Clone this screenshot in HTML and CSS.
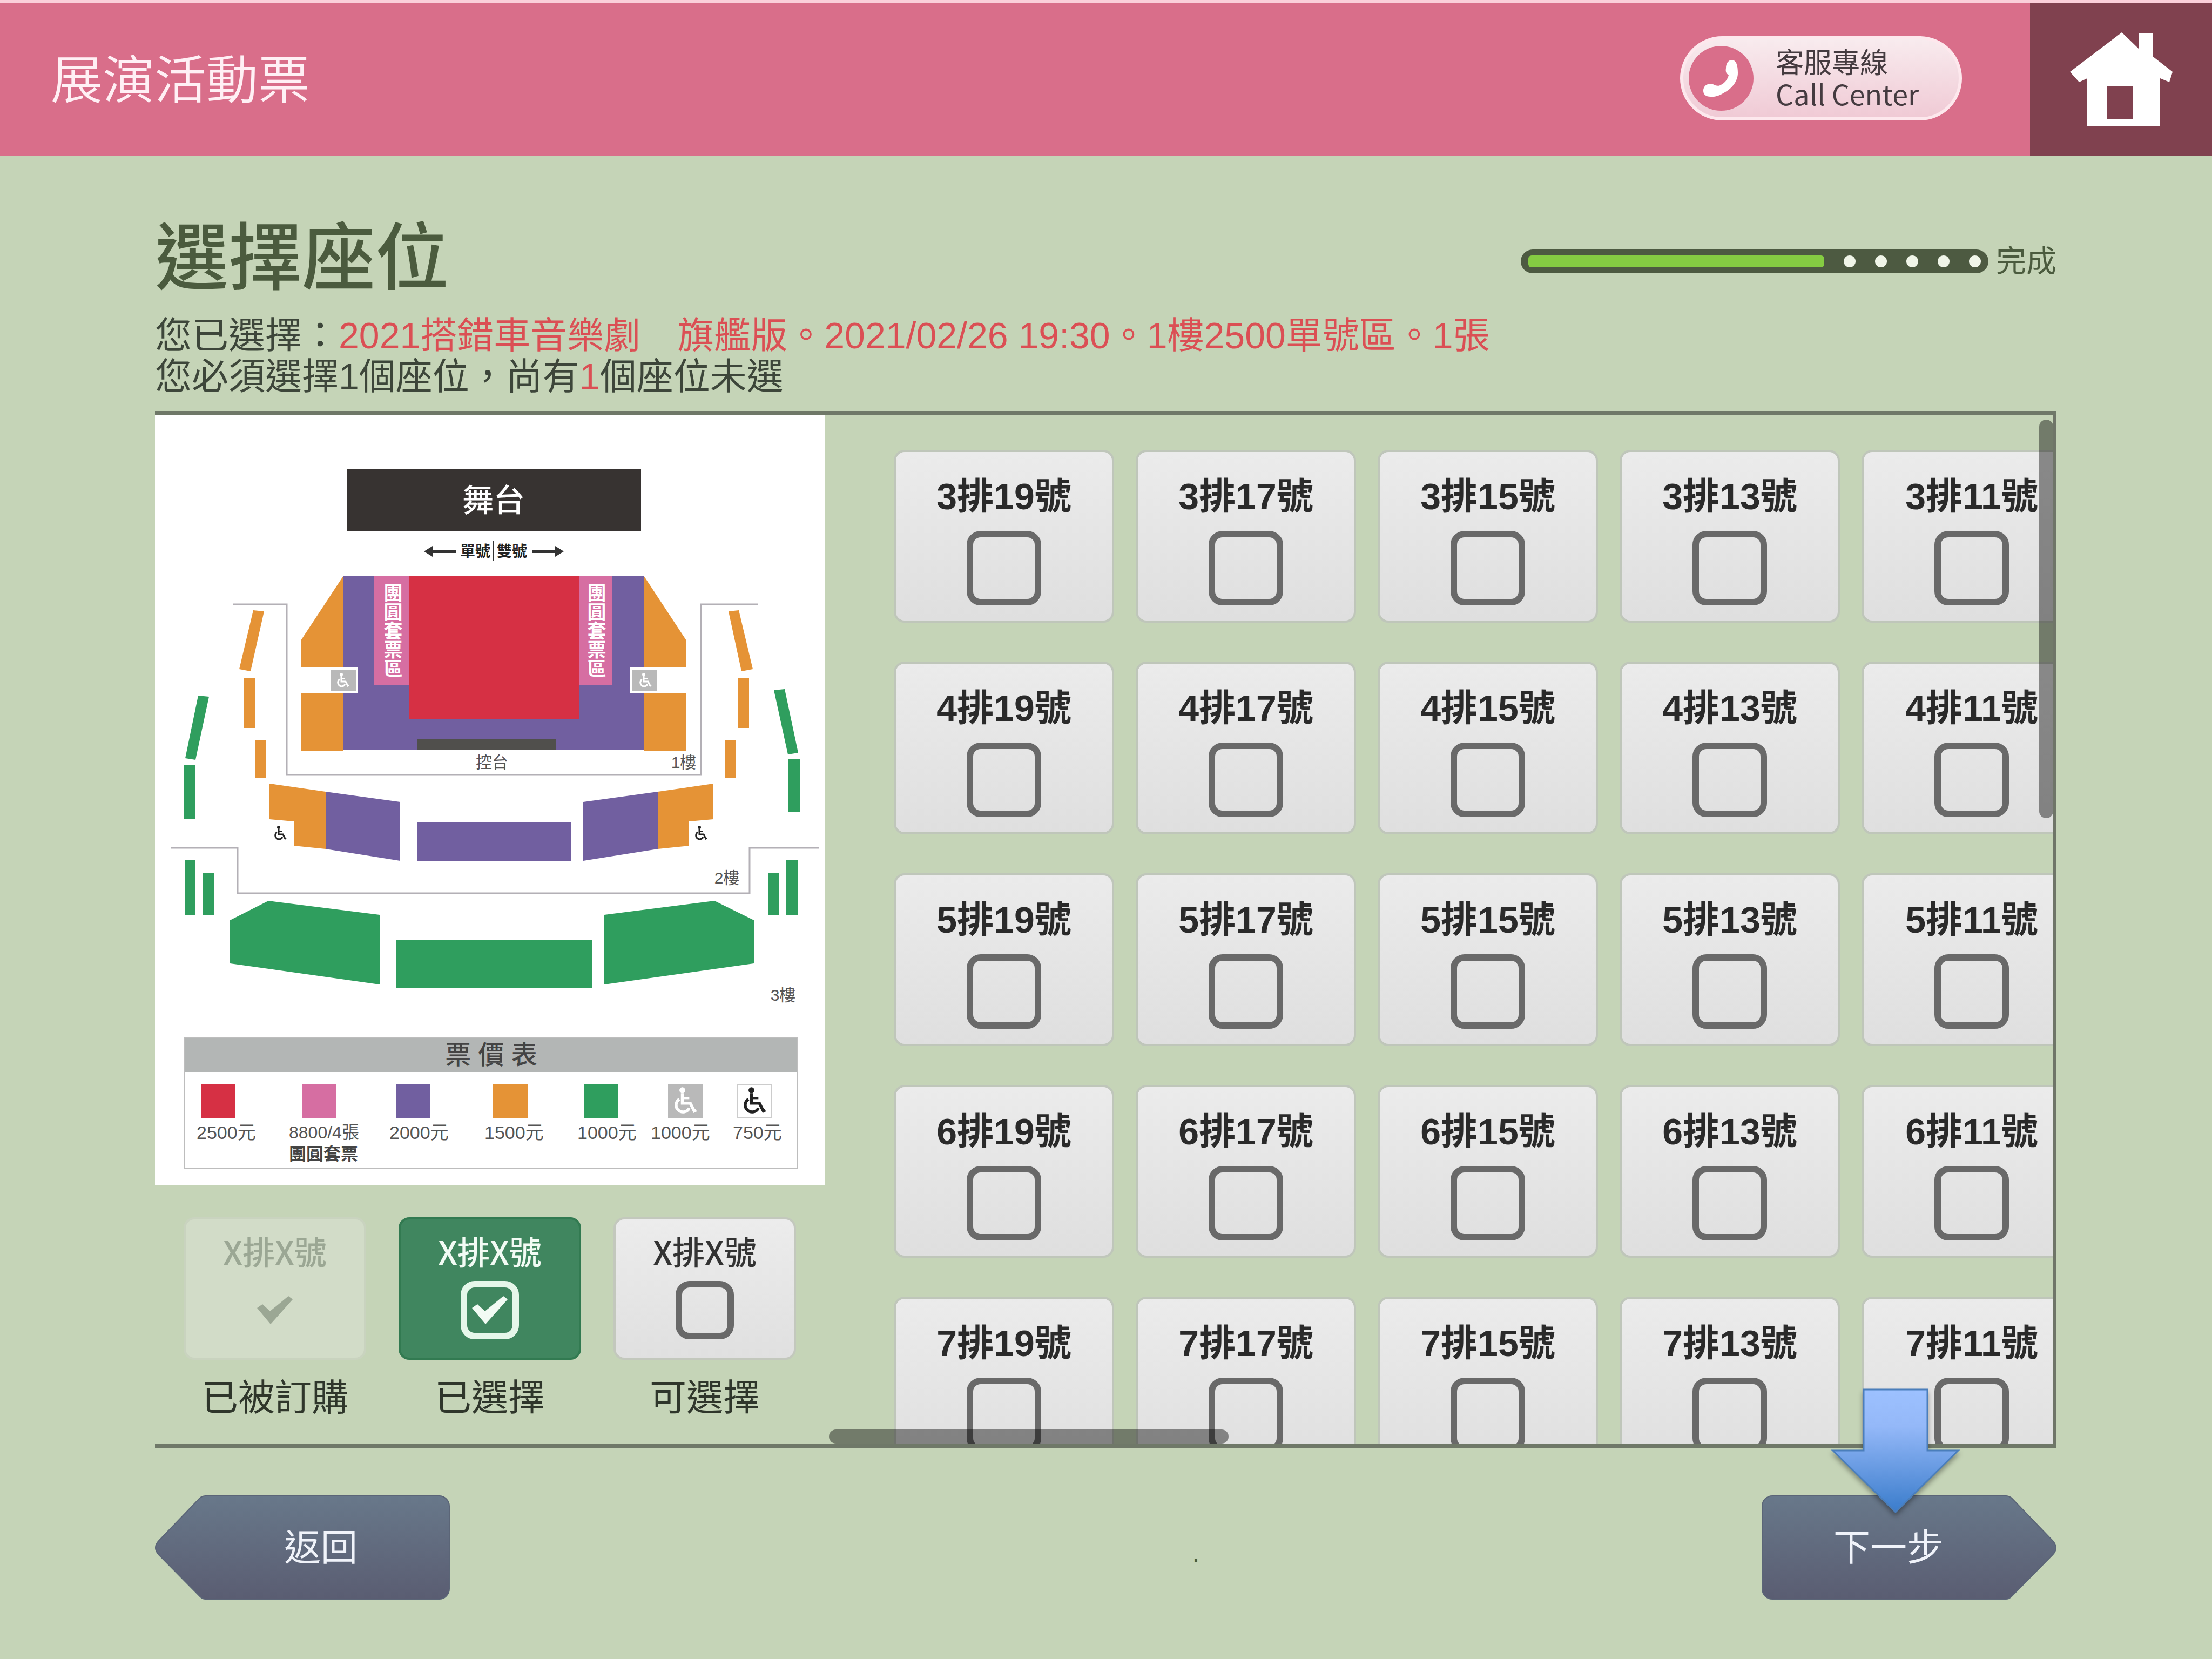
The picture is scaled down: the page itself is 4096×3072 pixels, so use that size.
FILE: index.html
```html
<!DOCTYPE html>
<html lang="zh-Hant">
<head>
<meta charset="utf-8">
<meta name="viewport" content="width=device-width, initial-scale=1">
<title>展演活動票</title>
<link rel="stylesheet" href="styles.css">
</head>
<body>
<svg class="defs" width="0" height="0" aria-hidden="true">
  <symbol id="wheelchair" viewBox="0 0 24 28">
    <circle cx="9" cy="3" r="3"/>
    <path d="M9 6v10h8l4 8 2-1" fill="none" stroke="currentColor" stroke-width="3"/>
    <path d="M9 11h7" fill="none" stroke="currentColor" stroke-width="2"/>
    <path d="M6 12a7 7 0 1 0 10 9" fill="none" stroke="currentColor" stroke-width="3"/>
  </symbol>
</svg>

<header class="topbar">
  <div class="topbar-title">展演活動票</div>
  <button class="call" type="button">
    <svg class="call-icon" viewBox="0 0 121 121" aria-hidden="true">
      <circle cx="60" cy="60" r="60" fill="#d96e8a"/>
      <path d="M80 26c8 0 11 10 11 24 0 16-12 30-26 37-8 5-17 8-25 7-8 0-13-4-13-11 0-9 8-15 18-12 4 2 8 4 13 2 9-4 14-11 16-19-5-3-6-7-5-13 0-8 4-15 11-15z" fill="#fff"/>
    </svg>
    <span class="call-text"><span class="call-zh">客服專線</span><span class="call-en">Call Center</span></span>
  </button>
  <a class="home" href="#" aria-label="首頁">
    <svg class="home-icon" viewBox="0 0 190 174" aria-hidden="true">
      <path fill="#fff" fill-rule="evenodd" d="M96 0l31 30V2h27v43l36 28-6 19-17-7v89H32V85l-15 7L0 73zM69 99v61h48V99z"/>
    </svg>
  </a>
</header>

<main class="page">
  <div class="heading">
    <h1>選擇座位</h1>
    <div class="progress">
      <div class="track"><div class="fill"></div><i></i><i></i><i></i><i></i><i></i></div>
      <span>完成</span>
    </div>
  </div>
  <p class="info">您已選擇：<em>2021搭錯車音樂劇　旗艦版。2021/02/26 19:30。1樓2500單號區。1張</em></p>
  <p class="info">您必須選擇1個座位，尚有<em>1</em>個座位未選</p>

  <div class="panel">
    <aside class="side">
      <div class="map">
        <svg class="plan" viewBox="0 0 1240 1152" role="img" aria-label="座位圖">
          <rect x="355" y="99" width="545" height="115" fill="#373331"/>
          <text class="t-stage" x="627" y="178">舞台</text>
          <g fill="#333">
            <path d="M498 252l16-10v7h43v6h-43v7zM757 252l-16-10v7h-43v6h43v7z"/>
            <rect x="625" y="232" width="3" height="37"/>
          </g>
          <text class="t-side" x="593" y="262">單號</text>
          <text class="t-side" x="661" y="262">雙號</text>
          <rect x="349" y="297" width="556" height="323" fill="#715fa0"/>
          <g fill="#e59336">
            <path d="M349 297v170h-79v-50zM270 515h79v106h-79zM905 297v170h79v-50zM905 515h79v106h-79z"/>
            <path d="M182 361l20 2-25 111-21-4zM165 486h20v93h-20zM185 601h21v70h-21z"/>
            <path d="M1062 363l19-2 26 109-21 4zM1079 486h21v93h-21zM1055 601h21v70h-21z"/>
          </g>
          <path fill="#fff" d="M325 467h50v48h-50zM880 467h50v48h-50z"/>
          <path fill="#b9b9b9" d="M325 472h47v38h-47zM884 472h46v38h-46z"/>
          <use href="#wheelchair" x="336" y="477" width="24" height="28" class="w-light"/>
          <use href="#wheelchair" x="896" y="477" width="24" height="28" class="w-light"/>
          <path fill="#d66ea2" d="M406 297h64v203h-64zM785 297h61v203h-61z"/>
          <rect x="470" y="297" width="315" height="266" fill="#d63044"/>
          <text class="t-zone" x="438" y="311">團圓套票區</text>
          <text class="t-zone" x="815" y="311">團圓套票區</text>
          <rect x="486" y="600" width="257" height="20" fill="#504f4c"/>
          <text class="t-small" x="624" y="653">控台</text>
          <text class="t-small" x="979" y="653">1樓</text>
          <g fill="none" stroke="#b3b0b6" stroke-width="3">
            <path d="M145 350h99v316h767V350h105M30 801h123v84h948v-84h128"/>
          </g>
          <g fill="#2f9e5e">
            <path d="M80 519l20 2-25 117-19-3zM53 647h21v100H53zM1146 509l20-2 25 118-19 3zM1173 636h21v99h-21z"/>
            <path d="M55 823h20v103H55zM88 848h21v78H88zM1136 848h20v78h-20zM1168 823h22v103h-22z"/>
            <path d="M139 935l71-36 206 26v129l-277-39zM446 971h363v89H446zM832 925l204-26 73 36v80l-277 39z"/>
          </g>
          <g fill="#e59336">
            <path d="M212 682l104 15v106l-59-6v-45l-45-4zM1034 682l-103 15v106l58-6v-45l45-4z"/>
          </g>
          <path fill="#715fa0" d="M316 697l138 19v109l-138-22zM485 754h286v71H485zM931 697l-138 19v109l138-22z"/>
          <use href="#wheelchair" x="220" y="760" width="24" height="28" class="w-dark"/>
          <use href="#wheelchair" x="999" y="760" width="24" height="28" class="w-dark"/>
          <text class="t-small" x="1059" y="867">2樓</text>
          <text class="t-small" x="1163" y="1084">3樓</text>
        </svg>
        <section class="prices">
          <h2>票 價 表</h2>
          <ul>
            <li><b class="sw red"></b>2500元</li>
            <li><b class="sw pink"></b>8800/4張<strong>團圓套票</strong></li>
            <li><b class="sw purple"></b>2000元</li>
            <li><b class="sw orange"></b>1500元</li>
            <li><b class="sw green"></b>1000元</li>
            <li><b class="sw gray"><svg><use href="#wheelchair"/></svg></b>1000元</li>
            <li><b class="sw white"><svg><use href="#wheelchair"/></svg></b>750元</li>
          </ul>
        </section>
      </div>
      <div class="states">
        <div class="state">
          <label class="card sold">X排X號
            <svg class="tick" viewBox="0 0 66 52" aria-hidden="true"><path d="M0 22l10-7 14 13L58 0l8 6-41 46z" fill="currentColor"/></svg>
          </label>
          <span>已被訂購</span>
        </div>
        <div class="state">
          <label class="card picked">X排X號
            <span class="box"><input type="checkbox" checked><svg class="tick" viewBox="0 0 66 52" aria-hidden="true"><path d="M0 22l10-7 14 13L58 0l8 6-41 46z" fill="currentColor"/></svg></span>
          </label>
          <span>已選擇</span>
        </div>
        <div class="state">
          <label class="card free">X排X號
            <span class="box"><input type="checkbox"></span>
          </label>
          <span>可選擇</span>
        </div>
      </div>
    </aside>

    <section class="seats" aria-label="座位">
      <div class="grid">
        <label class="seat">3排19號<input type="checkbox"></label>
        <label class="seat">3排17號<input type="checkbox"></label>
        <label class="seat">3排15號<input type="checkbox"></label>
        <label class="seat">3排13號<input type="checkbox"></label>
        <label class="seat">3排11號<input type="checkbox"></label>
        <label class="seat">4排19號<input type="checkbox"></label>
        <label class="seat">4排17號<input type="checkbox"></label>
        <label class="seat">4排15號<input type="checkbox"></label>
        <label class="seat">4排13號<input type="checkbox"></label>
        <label class="seat">4排11號<input type="checkbox"></label>
        <label class="seat">5排19號<input type="checkbox"></label>
        <label class="seat">5排17號<input type="checkbox"></label>
        <label class="seat">5排15號<input type="checkbox"></label>
        <label class="seat">5排13號<input type="checkbox"></label>
        <label class="seat">5排11號<input type="checkbox"></label>
        <label class="seat">6排19號<input type="checkbox"></label>
        <label class="seat">6排17號<input type="checkbox"></label>
        <label class="seat">6排15號<input type="checkbox"></label>
        <label class="seat">6排13號<input type="checkbox"></label>
        <label class="seat">6排11號<input type="checkbox"></label>
        <label class="seat">7排19號<input type="checkbox"></label>
        <label class="seat">7排17號<input type="checkbox"></label>
        <label class="seat">7排15號<input type="checkbox"></label>
        <label class="seat">7排13號<input type="checkbox"></label>
        <label class="seat">7排11號<input type="checkbox"></label>
      </div>
      <div class="bar bar-y"></div>
      <div class="bar bar-x"></div>
    </section>
  </div>

  <footer class="actions">
    <button class="nav back" type="button">
      <svg viewBox="0 0 546 193" aria-hidden="true">
        <defs><linearGradient id="slate" x2="0" y2="1"><stop offset="0" stop-color="#68788a"/><stop offset="1" stop-color="#5a5d72"/></linearGradient></defs>
        <path d="M94 1H526a19 19 0 0 1 19 19V173a19 19 0 0 1-19 19H94a14 14 0 0 1-10-4L7 110q-12-13 0-26L82 6a16 16 0 0 1 12-5z" fill="url(#slate)" stroke="#5b6577" stroke-width="2"/>
      </svg>
      <span>返回</span>
    </button>
    <span class="mark">.</span>
    <button class="nav next" type="button">
      <svg viewBox="0 0 546 193" aria-hidden="true">
        <path d="M452 1H20A19 19 0 0 0 1 20V173a19 19 0 0 0 19 19H452a14 14 0 0 0 10-4L539 110q12-13 0-26L464 6a16 16 0 0 0-12-5z" fill="url(#slate)" stroke="#5b6577" stroke-width="2"/>
      </svg>
      <span>下一步</span>
    </button>
    <svg class="pointer" viewBox="0 0 240 232" aria-hidden="true">
      <defs><linearGradient id="sky" x2="0" y2="1"><stop offset="0" stop-color="#9dc1ff"/><stop offset=".3" stop-color="#94b8f8"/><stop offset="1" stop-color="#3a7ccb"/></linearGradient></defs>
      <path d="M61 2h118v113h57L120 229 4 115h57z" fill="url(#sky)" stroke="#4a7ebb" stroke-width="3"/>
    </svg>
  </footer>
</main>
</body>
</html>
```
FILE: styles.css
```css
* { box-sizing: border-box; }

body {
  margin: 0;
  min-height: 100vh;
  background: #c5d4b7;
  color: #3d463a;
  font-family: "Liberation Sans", "Noto Sans CJK TC", sans-serif;
  font-size: 68px;
}

button { border: 0; margin: 0; padding: 0; background: none; color: inherit; font: inherit; }
.defs { position: absolute; }

/* top bar */
.topbar {
  display: flex;
  align-items: stretch;
  height: 289px;
  border-top: 5px solid #fbcfda;
  background: #d96e8a;
}
.topbar-title {
  flex: 1;
  padding: 4px 0 0 94px;
  color: #fff0f5;
  font-size: 96px;
  font-weight: 350;
  line-height: 280px;
}
.call {
  display: flex;
  align-items: center;
  gap: 40px;
  align-self: center;
  width: 522px;
  height: 156px;
  margin: 0 126px 4px 0;
  padding-left: 10px;
  border: 6px solid #fde8ed;
  border-radius: 78px;
  background: linear-gradient(#f8ebee, #f0cad5);
  color: #453b40;
  font-size: 52px;
  line-height: 56px;
  text-align: left;
}
.call-icon { width: 121px; height: 121px; }
.call-text { display: flex; flex-direction: column; }
.call-en { font-family: "Noto Sans CJK TC", sans-serif; }
.home {
  display: flex;
  align-items: center;
  justify-content: center;
  width: 337px;
  background: #80414f;
}
.home-icon { width: 190px; height: 174px; }

/* heading */
.page { padding: 106px 288px 110px 287px; }
.heading { display: flex; justify-content: space-between; align-items: center; height: 164px; margin-bottom: 24px; }
h1 { margin: 0; padding-top: 4px; color: #4b5b3e; font-size: 136px; font-weight: 500; line-height: 160px; }
.progress { display: flex; align-items: center; gap: 14px; margin-top: 14px; font-size: 56px; line-height: 64px; color: #4b5b3e; }
.track {
  display: flex;
  align-items: center;
  gap: 36px;
  width: 866px;
  height: 44px;
  padding: 0 14px;
  border-radius: 22px;
  background: #4d5a41;
}
.track i { width: 22px; height: 22px; border-radius: 50%; background: #f0f5e8; }
.fill { flex: 1; height: 22px; border-radius: 6px; background: #85cc42; }
.info { margin: 0; line-height: 76px; white-space: nowrap; }
.info em { color: #db4f54; font-style: normal; }

/* main panel */
.panel {
  display: flex;
  margin-top: 26px;
  border-top: 8px solid #6f7868;
  border-bottom: 8px solid #6f7868;
}
.side { flex: none; width: 1240px; }
.map { padding-bottom: 30px; background: #fff; }
.plan { display: block; width: 100%; }
.plan text { text-anchor: middle; }
.t-stage { fill: #fff; font-size: 58px; font-weight: 500; }
.t-side { fill: #222; font-size: 28px; font-weight: 700; }
.t-small { fill: #555; font-size: 30px; }
.plan .t-zone { fill: #fff; font-size: 35px; font-weight: 700; text-anchor: start; writing-mode: vertical-rl; }
.w-light { color: #fff; fill: #fff; }
.w-dark { color: #222; fill: #222; }

.prices { margin: 0 49px 0 54px; border: 2px solid #bdbdbd; }
.prices h2 { margin: 0; background: #b3b6b5; color: #444; font-size: 48px; font-weight: 500; line-height: 62px; text-align: center; }
.prices ul {
  display: grid;
  grid-template-columns: 171fr 186fr 176fr 172fr 136fr 152fr 119fr;
  height: 178px;
  margin: 0;
  padding: 22px 0 0 21px;
  list-style: none;
  color: #555;
  font-size: 34px;
  line-height: 40px;
  white-space: nowrap;
}
.prices strong { display: block; color: #444; font-size: 32px; }
.prices li:nth-child(2) { font-size: 32px; }
.sw { display: flex; align-items: center; justify-content: center; width: 64px; height: 64px; margin: 0 0 6px 12px; }
.sw svg { width: 44px; height: 52px; fill: currentColor; }
.red { background: #d63044; margin-left: 8px; }
.pink { background: #d66ea2; margin-left: 24px; }
.purple { background: #715fa0; }
.orange { background: #e59336; margin-left: 16px; }
.green { background: #2f9e5e; }
.gray { background: #b9b9b9; color: #fff; margin-left: 32px; }
.white { border: 2px solid #ccc; color: #222; margin-left: 8px; }

.states {
  display: grid;
  grid-template-columns: repeat(3, 1fr);
  gap: 60px;
  padding: 59px 53px 43px;
}
.state { display: flex; flex-direction: column; align-items: center; gap: 28px; color: #2f362b; line-height: 84px; white-space: nowrap; }
.card {
  display: flex;
  flex-direction: column;
  align-items: center;
  align-self: stretch;
  height: 264px;
  padding-top: 20px;
  border: 4px solid #c3c8bd;
  border-radius: 20px;
  font-family: "Noto Sans CJK TC", sans-serif;
  font-size: 60px;
  font-weight: 500;
  line-height: 76px;
}
.sold { border-color: #c9d3bf; background: #d2dcc8; color: #9ba794; }
.sold .tick { margin-top: 46px; }
.picked { border-color: #327a51; background: #40865f; color: #f2fbf4; }
.free { background: linear-gradient(#ececec, #e0e0e0); color: #333; }
.tick { width: 66px; height: 52px; }
.box { display: grid; place-items: center; margin-top: 18px; }
.box > * { grid-area: 1 / 1; }

input[type="checkbox"] {
  appearance: none;
  margin: 0;
  width: 138px;
  height: 138px;
  border: 12px solid #696969;
  border-radius: 26px;
}
.box input[type="checkbox"] { width: 108px; height: 108px; }
.picked input[type="checkbox"] { border-color: #e6f7ea; }

/* seats */
.seats {
  position: relative;
  flex: 1;
  contain: size;
  overflow: hidden;
  border-right: 6px solid #6f7568;
}
.grid {
  display: grid;
  grid-template-columns: repeat(5, 408px);
  gap: 72px 40px;
  padding: 64px 0 0 128px;
}
.seat {
  display: flex;
  flex-direction: column;
  align-items: center;
  gap: 24px;
  height: 320px;
  padding-top: 42px;
  border: 4px solid #bfc6ba;
  border-radius: 20px;
  background: linear-gradient(#ebebeb, #dfdfdf);
  color: #2a2a2a;
  font-weight: 700;
  line-height: 80px;
}
.bar { position: absolute; border-radius: 13px; background: rgba(0, 0, 0, .42); }
.bar-y { top: 8px; right: 0; width: 26px; height: 738px; }
.bar-x { left: 8px; bottom: 0; width: 740px; height: 26px; }

/* actions */
.actions { position: relative; display: flex; align-items: center; margin-top: 88px; }
.nav { position: relative; width: 546px; height: 193px; color: #f0f3fa; line-height: 80px; }
.nav svg { position: absolute; inset: 0; width: 100%; height: 100%; }
.nav span { position: relative; }
.back { padding-left: 68px; }
.next { padding-right: 76px; }
.mark { flex: 1; padding: 20px 0 0 334px; color: #4b5b3e; font-size: 48px; line-height: 48px; text-align: center; }
.pointer {
  position: absolute;
  right: 178px;
  top: -198px;
  width: 240px;
  height: 232px;
  overflow: visible;
  filter: drop-shadow(0 6px 5px rgba(0, 0, 0, .35));
}
```
